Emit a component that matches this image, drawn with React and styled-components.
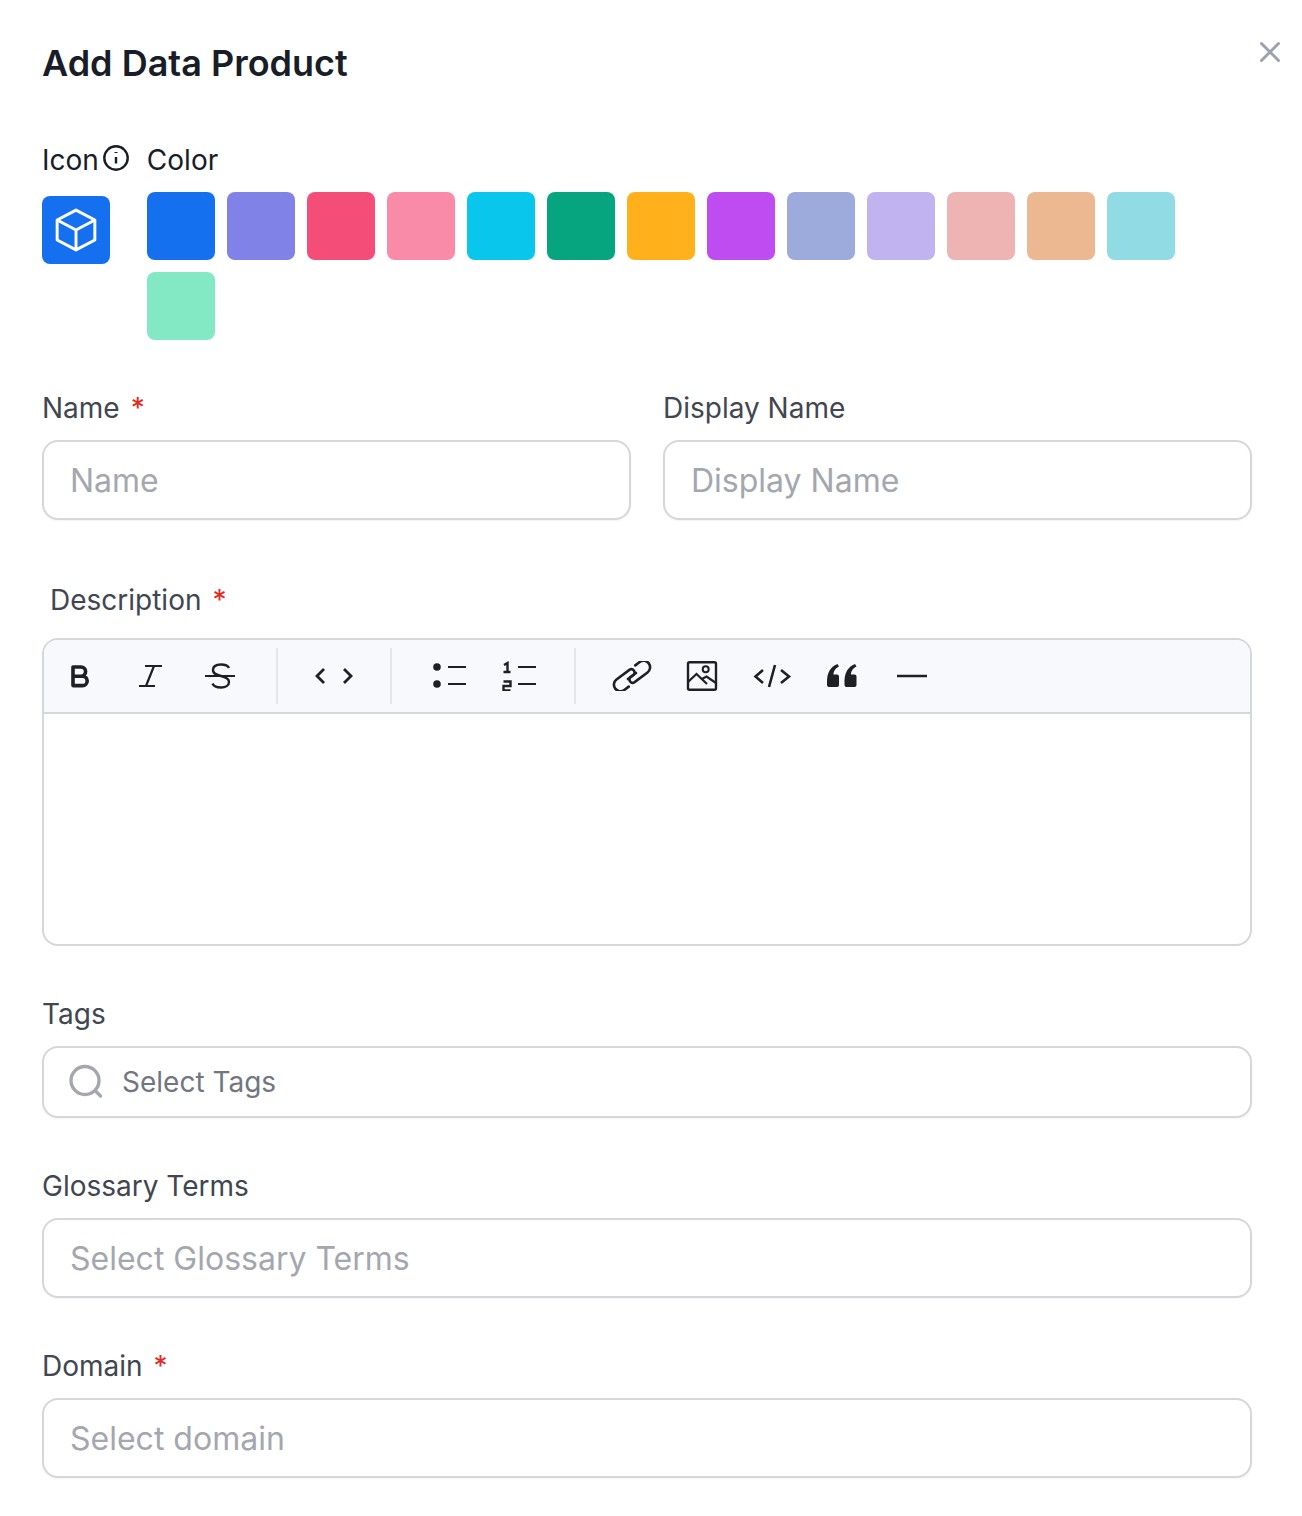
import React from 'react';
import styled, { createGlobalStyle } from 'styled-components';
import { X } from 'lucide-react';

const GlobalStyle = createGlobalStyle`
  * {
    box-sizing: border-box;
  }

  body {
    margin: 0;
    background: #fff;
    font-family: Inter, "Noto Sans", sans-serif;
  }
`;

const COLORS = [
  '#1570ef',
  '#8082e8',
  '#f44e78',
  '#f98ba9',
  '#08c6ec',
  '#07a57f',
  '#ffb01a',
  '#bf4cf0',
  '#9caadc',
  '#c0b3ef',
  '#eeb3b3',
  '#ecb892',
  '#90dbe4',
  '#83e9c5',
];

const Page = styled.div`
  position: relative;
  width: 1302px;
  height: 1516px;
  padding: 41px 50px 0 42px;
  overflow: hidden;
`;

const Title = styled.h1`
  margin: 0;
  font-size: 36px;
  line-height: 44px;
  font-weight: 600;
  color: #181d27;
`;

const CloseBtn = styled.button`
  position: absolute;
  top: 35px;
  right: 15px;
  width: 34px;
  height: 34px;
  padding: 0;
  border: 0;
  background: none;
  color: #9da3ad;
  display: flex;
  align-items: center;
  justify-content: center;
`;

const AppearanceRow = styled.div`
  display: flex;
  gap: 18px;
  margin-top: 58px;
`;

const IconCol = styled.div`
  display: flex;
  flex-direction: column;
`;

const PickLabel = styled.div`
  display: flex;
  align-items: center;
  gap: 4px;
  font-size: 28px;
  line-height: 34px;
  color: #181d27;
  height: 34px;
`;

const IconTile = styled.div`
  width: 68px;
  height: 68px;
  margin-top: 19px;
  border-radius: 8px;
  background: #1570ef;
  color: #fff;
  display: flex;
  align-items: center;
  justify-content: center;
`;

const Swatches = styled.div`
  display: flex;
  flex-wrap: wrap;
  gap: 12px;
  width: 1040px;
  margin-top: 15px;
`;

const Swatch = styled.div`
  width: 68px;
  height: 68px;
  border-radius: 8px;
  background: ${(p) => p.$color};
`;

const TwoCols = styled.div`
  display: grid;
  grid-template-columns: 589px 589px;
  gap: 32px;
  margin-top: ${(p) => p.$top}px;
`;

const Field = styled.div`
  margin-top: ${(p) => p.$top || 0}px;
`;

const Label = styled.label`
  display: block;
  font-size: 28px;
  line-height: 34px;
  color: #414651;
  margin-bottom: ${(p) => p.$gap || 15}px;
  padding-left: ${(p) => p.$indent || 0}px;

  span {
    color: #e5281e;
    margin-left: 11px;
  }
`;

const Input = styled.div`
  height: ${(p) => p.$height || 80}px;
  border: 2px solid #d5d7da;
  border-radius: 16px;
  padding: 0 26px;
  display: flex;
  align-items: center;
  gap: 18px;
  font-size: ${(p) => p.$size || 32}px;
  color: ${(p) => p.$color || '#a4a7ae'};
  box-shadow: 0 1px 2px rgba(10, 13, 18, 0.05);
`;

const Editor = styled.div`
  height: 308px;
  border: 2px solid #d5d7da;
  border-radius: 16px;
  overflow: hidden;
`;

const Toolbar = styled.div`
  height: 74px;
  padding-left: 1px;
  display: flex;
  align-items: center;
  background: #f8f9fd;
  border-bottom: 2px solid #d5d7da;
`;

const ToolBtn = styled.div`
  width: 70px;
  height: 30px;
  display: flex;
  align-items: center;
  justify-content: center;
  color: #1f2024;
`;

const ToolDivider = styled.div`
  width: 2px;
  height: 56px;
  background: #e4e6ea;
  margin: 0 ${(p) => p.$right}px 0 ${(p) => p.$left}px;
`;

const ToolIcon = ({ children }) => (
  <svg width="40" height="30" viewBox="0 0 40 30" fill="none" stroke="currentColor" strokeWidth="2">
    {children}
  </svg>
);

const QUOTE_MARK = 'M5 21C5 12 8 6 15.500 3L17 5.500C13 7.500 11.500 10.500 11.500 13.500H15Q17 13.500 17 15.500V24Q17 26 15 26H7Q5 26 5 24Z';

const App = () => {
  return (
    <Page>
      <GlobalStyle />
      <CloseBtn aria-label="Close">
        <X size={34} strokeWidth={2.1} />
      </CloseBtn>
      <Title>Add Data Product</Title>

      <AppearanceRow>
        <IconCol>
          <PickLabel>
            Icon
            <svg width="26" height="26" viewBox="0 0 26 26" fill="none" stroke="#181d27" strokeWidth="2.4" style={{ marginTop: -4 }}>
              <circle cx="13" cy="13" r="11.700" />
              <path d="M13 12v6.500" />
              <path d="M13 7v1" strokeWidth="3" />
            </svg>
          </PickLabel>
          <IconTile>
            <svg width="42" height="44" viewBox="0 0 40 42" fill="none" stroke="currentColor" strokeWidth="2.800" strokeLinejoin="round">
              <path d="M20 2 L38 11.500 V30.500 L20 40 L2 30.500 V11.500 Z" />
              <path d="M2 11.500 L20 21 L38 11.500 M20 21 V40" />
            </svg>
          </IconTile>
        </IconCol>
        <div>
          <PickLabel>Color</PickLabel>
          <Swatches>
            {COLORS.map((c) => (
              <Swatch key={c} $color={c} />
            ))}
          </Swatches>
        </div>
      </AppearanceRow>

      <TwoCols $top={51}>
        <Field>
          <Label>Name<span>*</span></Label>
          <Input>Name</Input>
        </Field>
        <Field>
          <Label>Display Name</Label>
          <Input>Display Name</Input>
        </Field>
      </TwoCols>

      <Field $top={63}>
        <Label $indent={8} $gap={21}>Description<span>*</span></Label>
        <Editor>
          <Toolbar>
            <ToolBtn>
              <ToolIcon>
                <path strokeWidth="3.600" strokeLinejoin="round" d="M13 6h8a4.600 4.600 0 0 1 0 9.200h-8zM13 15.200h9.500a4.700 4.700 0 0 1 0 9.400H13z" />
              </ToolIcon>
            </ToolBtn>
            <ToolBtn>
              <ToolIcon>
                <path strokeWidth="2.200" d="M15 5h17M9 25h16M24 5l-8 20" />
              </ToolIcon>
            </ToolBtn>
            <ToolBtn>
              <ToolIcon>
                <path d="M5 15h30" />
                <path strokeWidth="2.400" d="M29 7c-1-2.400-4-3.500-8-3.500-5 0-8 2-8 5.500 0 4 4 5 8 6 4.500 1.100 8 2.300 8 6 0 3.500-3.500 5.500-8 5.500-4.500 0-7.500-1.500-8.500-4" />
              </ToolIcon>
            </ToolBtn>
            <ToolDivider $left={21} $right={21} />
            <ToolBtn>
              <ToolIcon>
                <path strokeWidth="2.800" d="M10 8l-7 7 7 7M30 8l7 7-7 7" />
              </ToolIcon>
            </ToolBtn>
            <ToolDivider $left={21} $right={23} />
            <ToolBtn>
              <ToolIcon>
                <circle cx="7" cy="6" r="3.800" fill="currentColor" stroke="none" />
                <circle cx="7" cy="23" r="3.800" fill="currentColor" stroke="none" />
                <path d="M18 6h18M18 23h18" />
              </ToolIcon>
            </ToolBtn>
            <ToolBtn>
              <ToolIcon>
                <path strokeWidth="2.400" d="M4 4l3.500-2V11M3.500 11h7M3.500 20.500h7V25h-7v4.500h7" />
                <path d="M18 6h18M18 23h18" />
              </ToolIcon>
            </ToolBtn>
            <ToolDivider $left={19} $right={21} />
            <ToolBtn>
              <ToolIcon>
                <g strokeWidth="2.600" strokeLinecap="round" transform="rotate(-37 20 15)">
                  <path d="M11 21.500H5.500a6.250 6.250 0 0 1 0-13H22a3.300 3.300 0 0 1 0 6.500H15" />
                  <path d="M29 8.500H34.500a6.250 6.250 0 0 1 0 13H18a3.300 3.300 0 0 1 0-6.500H25" />
                </g>
              </ToolIcon>
            </ToolBtn>
            <ToolBtn>
              <ToolIcon>
                <rect x="6" y="1.200" width="28" height="27.600" rx="1.500" strokeWidth="2.400" />
                <circle cx="23.700" cy="8.300" r="3" />
                <path strokeWidth="2.200" d="M6 21L14.500 13L25 23M20 18L24.500 15.500L34 22" />
              </ToolIcon>
            </ToolBtn>
            <ToolBtn>
              <ToolIcon>
                <path strokeWidth="2.600" d="M11 9L3.500 15.500L11 22M29 9L37 15.500L29 22M23 4L17 26" />
              </ToolIcon>
            </ToolBtn>
            <ToolBtn>
              <ToolIcon>
                <path fill="currentColor" stroke="none" d={QUOTE_MARK} />
                <path fill="currentColor" stroke="none" d={QUOTE_MARK} transform="translate(17.500 0)" />
              </ToolIcon>
            </ToolBtn>
            <ToolBtn>
              <ToolIcon>
                <path strokeWidth="2.600" d="M5 15h30" />
              </ToolIcon>
            </ToolBtn>
          </Toolbar>
        </Editor>
      </Field>

      <Field $top={51}>
        <Label>Tags</Label>
        <Input $height={72} $size={28} $color="#717680">
          <svg width="36" height="36" viewBox="0 0 36 36" fill="none" stroke="#a4a7ae" strokeWidth="3.400" style={{ marginLeft: -2, flexShrink: 0 }}>
            <circle cx="17" cy="16.500" r="14" />
            <path d="M28 27.500l4.500 4.500" strokeLinecap="round" />
          </svg>
          Select Tags
        </Input>
      </Field>

      <Field $top={51}>
        <Label>Glossary Terms</Label>
        <Input>Select Glossary Terms</Input>
      </Field>

      <Field $top={51}>
        <Label>Domain<span>*</span></Label>
        <Input>Select domain</Input>
      </Field>
    </Page>
  );
};

export default App;
